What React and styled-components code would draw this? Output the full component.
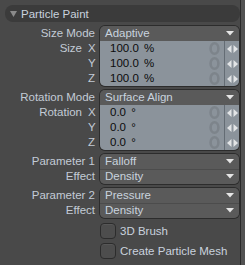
import React from "react";
import styled, { createGlobalStyle } from "styled-components";

const Global = createGlobalStyle`
    body {
        margin: 0;
        background: #525252;
        font-family: "Liberation Sans", Arial, sans-serif;
        font-size: 11px;
    }
`;

const Panel = styled.div`
    width: 241px;
    height: 265px;
    background: #494949;
    border-right: 1px solid #2a2a2a;
    padding-top: 5px;
    box-sizing: border-box;
    display: flex;
    flex-direction: column;
    gap: 4px;
`;

const Header = styled.div`
    margin-left: 5px;
    width: 235px;
    height: 17px;
    border-radius: 8px;
    background: #3b3b3b;
    display: flex;
    align-items: center;
    gap: 4px;
    padding-left: 5px;
    box-sizing: border-box;
    color: #c9d2de;
    font-size: 11.5px;
`;

const Group = styled.div`
    display: flex;
    gap: 5px;
`;

const Labels = styled.div`
    width: 95px;
    display: flex;
    flex-direction: column;
`;

const Label = styled.div`
    height: 15px;
    line-height: 15px;
    color: #c3cbd6;
    font-size: 11.5px;
    display: flex;
    justify-content: flex-end;
    white-space: nowrap;
`;

const Axis = styled.span`
    width: 7px;
    margin-left: 6px;
    text-align: right;
`;

const Box = styled.div`
    width: 139px;
    border-radius: 5px;
    overflow: hidden;
    box-shadow: 0 0 0 1px #2c2c2c;
    display: flex;
    flex-direction: column;
`;

const Drop = styled.div`
    height: 15px;
    line-height: 15px;
    background: #5a5a5a;
    color: #c9d3de;
    font-size: 11.5px;
    padding-left: 5px;
    display: flex;
    align-items: center;
    justify-content: space-between;
    box-shadow: ${(p) => (p.$split ? "inset 0 1px 0 #4c4c4c" : "none")};
`;

const Value = styled.div`
    height: 15px;
    line-height: 15px;
    background: #8b939b;
    color: #0c0c0c;
    font-size: 11.5px;
    display: flex;
    align-items: center;
`;

const Num = styled.span`
    flex: 1;
    padding-left: 10px;
    word-spacing: 2px;
`;

const Ring = styled.span`
    width: 14px;
    display: flex;
    justify-content: center;
    margin-right: 3px;
`;

const Spin = styled.span`
    width: 14px;
    height: 15px;
    border-left: 1px solid #646c74;
    display: flex;
    align-items: center;
    justify-content: center;
`;

const CheckRow = styled.label`
    margin-left: 100px;
    display: flex;
    align-items: center;
    gap: 4px;
    color: #c9d2de;
    font-size: 11.5px;
    height: 16px;
    margin-top: ${(p) => (p.$first ? "1px" : "0")};
`;

const Check = styled.span`
    width: 16px;
    height: 16px;
    box-sizing: border-box;
    border-radius: 4px;
    background: #4d4d4d;
    border: 1px solid #2c2c2c;
    box-shadow: inset 0 1px 0 #575757;
`;

const Arrow = () => (
    <svg width="8" height="5" viewBox="0 0 8 5" style={{ marginRight: 5 }}>
        <polygon points="0,0 8,0 4,4.5" fill="#e6e6e6" />
    </svg>
);

const Tri = () => (
    <svg width="7" height="6" viewBox="0 0 7 6">
        <polygon points="0,0 7,0 3.5,6" fill="#8a8a8a" />
    </svg>
);

const RingIcon = () => (
    <svg width="11" height="13" viewBox="0 0 11 13">
        <ellipse cx="5.5" cy="6.5" rx="3.9" ry="5.2" fill="none" stroke="#7d848b" strokeWidth="2.6" />
    </svg>
);

const SpinIcon = () => (
    <svg width="11" height="8" viewBox="0 0 11 8">
        <polygon points="4.5,0 4.5,8 0,4" fill="#e2e4e6" />
        <polygon points="6.5,0 6.5,8 11,4" fill="#e2e4e6" />
    </svg>
);

function ValueRow({ children }) {
    return (
        <Value>
            <Num>{children}</Num>
            <Ring><RingIcon /></Ring>
            <Spin><SpinIcon /></Spin>
        </Value>
    );
}

function Vector({ mode, modeValue, name, unit }) {
    return (
        <Group>
            <Labels>
                <Label>{mode}</Label>
                <Label>{name}<Axis>X</Axis></Label>
                <Label><Axis>Y</Axis></Label>
                <Label><Axis>Z</Axis></Label>
            </Labels>
            <Box>
                <Drop>{modeValue}<Arrow /></Drop>
                <ValueRow>{unit}</ValueRow>
                <ValueRow>{unit}</ValueRow>
                <ValueRow>{unit}</ValueRow>
            </Box>
        </Group>
    );
}

function Param({ name, value, effect }) {
    return (
        <Group>
            <Labels>
                <Label>{name}</Label>
                <Label>Effect</Label>
            </Labels>
            <Box>
                <Drop>{value}<Arrow /></Drop>
                <Drop $split>{effect}<Arrow /></Drop>
            </Box>
        </Group>
    );
}

export default function App() {
    return (
        <>
            <Global />
            <Panel>
                <Header><Tri />Particle Paint</Header>
                <Vector mode="Size Mode" modeValue="Adaptive" name="Size" unit="100.0 %" />
                <Vector mode="Rotation Mode" modeValue="Surface Align" name="Rotation" unit="0.0 °" />
                <Param name="Parameter 1" value="Falloff" effect="Density" />
                <Param name="Parameter 2" value="Pressure" effect="Density" />
                <CheckRow $first><Check />3D Brush</CheckRow>
                <CheckRow><Check />Create Particle Mesh</CheckRow>
            </Panel>
        </>
    );
}
